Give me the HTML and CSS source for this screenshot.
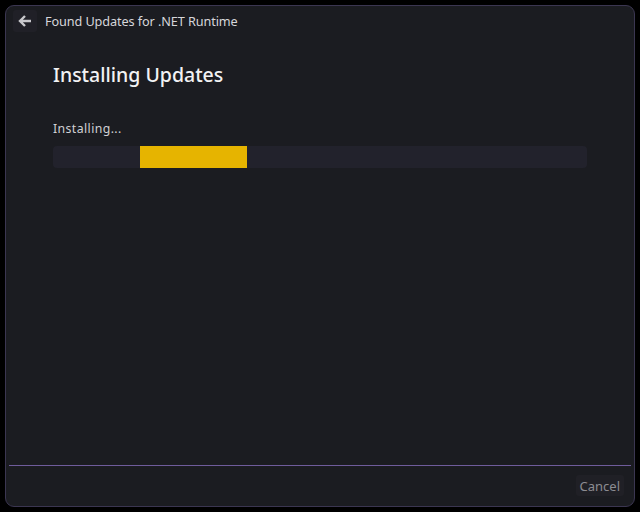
FILE: index.html
```html
<!DOCTYPE html>
<html>
<head>
<meta charset="utf-8">
<link rel="stylesheet" href="styles.css">
</head>
<body>
<div class="window">
  <div class="header">
    <button class="back" aria-label="Back">
      <svg width="14" height="12" viewBox="0 0 14 12"><path d="M7 1 L2 6 L7 11 M2 6 H13" fill="none" stroke="#c8c8cc" stroke-width="2.4" stroke-linejoin="miter"/></svg>
    </button>
    <span class="title">Found Updates for .NET Runtime</span>
  </div>
  <div class="content">
    <h1>Installing Updates</h1>
    <div class="status">Installing...</div>
    <div class="progress"><div class="fill"></div></div>
  </div>
  <div class="footer">
    <button class="cancel">Cancel</button>
  </div>
</div>
</body>
</html>
```
FILE: styles.css
```css
* { box-sizing: border-box; }
html, body { margin: 0; padding: 0; background: #000; height: 100%; }
body { padding: 5px; font-family: "Noto Sans", sans-serif; }
.window {
  height: 502px;
  background: #1b1c21;
  border: 1px solid #3b3651;
  border-radius: 9px;
  display: flex;
  flex-direction: column;
  padding: 0 3px;
}
.header {
  display: flex;
  align-items: center;
  height: 30px;
  margin-top: 0;
  padding-left: 4px;
  gap: 8px;
}
.back {
  width: 24px; height: 22px;
  background: #202027;
  border: none; border-radius: 3px;
  display: flex; align-items: center; justify-content: center;
  padding: 0;
}
.title { color: #d6d6da; font-size: 12.7px; letter-spacing: -0.1px; }
.content { flex: 1; padding: 26px 44px 0 44px; }
h1 { margin: 0; color: #f2f2f4; font-size: 19.5px; font-weight: 500; line-height: 26px; }
.status { color: #d0d0d4; font-size: 12.3px; letter-spacing: 0.4px; margin-top: 33px; line-height: 16px; }
.progress {
  margin-top: 9px;
  height: 22px;
  background: #22222c;
  border-radius: 4px;
  position: relative;
  overflow: hidden;
}
.fill { position: absolute; left: 87px; top: 0; bottom: 0; width: 107px; background: #e6b400; }
.footer {
  border-top: 1px solid #6f5c9c;
  height: 41px;
  display: flex;
  justify-content: flex-end;
  align-items: center;
  padding-right: 7px;
  padding-bottom: 2px;
}
.cancel {
  background: #202026; border: none; border-radius: 3px;
  color: #8c8c92; font-family: "Noto Sans", sans-serif; font-size: 13px;
  padding: 2px 4px; height: 21px;
}
```
